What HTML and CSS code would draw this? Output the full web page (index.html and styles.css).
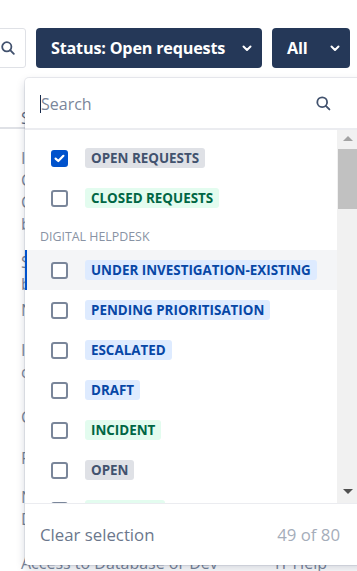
FILE: index.html
```html
<!DOCTYPE html>
<html lang="en">
<head>
<meta charset="utf-8">
<title>Requests filter</title>
<link rel="stylesheet" href="styles.css">
</head>
<body>
<div class="page">
  <div class="toolbar">
    <button class="icon-btn" aria-label="Search">
      <svg width="14" height="14" viewBox="0 0 14 14"><circle cx="5.8" cy="5.8" r="4.6" fill="none" stroke="#42526e" stroke-width="1.8"/><path d="M9.2 9.2 L12.8 12.8" stroke="#42526e" stroke-width="1.9" stroke-linecap="round"/></svg>
    </button>
    <button class="dark-btn status-btn">Status: Open requests
      <svg class="chev" width="10" height="7" viewBox="0 0 10 7"><path d="M1.5 1.5 L5 5 L8.5 1.5" fill="none" stroke="#fff" stroke-width="2" stroke-linecap="round" stroke-linejoin="round"/></svg>
    </button>
    <button class="dark-btn all-btn">All
      <svg class="chev" width="10" height="7" viewBox="0 0 10 7"><path d="M1.5 1.5 L5 5 L8.5 1.5" fill="none" stroke="#fff" stroke-width="2" stroke-linecap="round" stroke-linejoin="round"/></svg>
    </button>
  </div>

  <div class="table">
    <div class="thead">Summary</div>
    <div class="trow r1"><div>Issue with</div><div>Cannot access</div><div>Contact form</div><div>broken</div></div>
    <div class="trow r2"><div>Setup new</div><div>build server</div></div>
    <div class="trow r3"><div>New laptop</div></div>
    <div class="trow r4"><div>Install</div><div>certificate</div></div>
    <div class="trow r5"><div>Change</div></div>
    <div class="trow r6"><div>Fix login</div></div>
    <div class="trow r7"><div>Network</div><div>Down</div></div>
    <div class="trow r8"><div class="last">Access to Database or Dev</div><div class="cell2">IT Help</div></div>
  </div>

  <div class="dropdown">
    <div class="search">
      <span class="caret"></span><span class="placeholder">Search</span>
      <svg class="search-ico" width="15" height="15" viewBox="0 0 15 15"><circle cx="6.2" cy="6.2" r="4.9" fill="none" stroke="#42526e" stroke-width="1.8"/><path d="M9.8 9.8 L13.4 13.4" stroke="#42526e" stroke-width="1.9" stroke-linecap="round"/></svg>
    </div>
    <div class="list-wrap">
      <div class="list">
        <div class="opt">
          <span class="cb checked"><svg width="11" height="9" viewBox="0 0 11 9"><path d="M1.6 4.6 L4.3 7 L9.4 1.8" fill="none" stroke="#fff" stroke-width="2.2" stroke-linecap="round" stroke-linejoin="round"/></svg></span>
          <span class="loz grey">OPEN REQUESTS</span>
        </div>
        <div class="opt"><span class="cb"></span><span class="loz green">CLOSED REQUESTS</span></div>
        <div class="group">DIGITAL HELPDESK</div>
        <div class="opt active"><span class="cb"></span><span class="loz blue">UNDER INVESTIGATION-EXISTING</span></div>
        <div class="opt"><span class="cb"></span><span class="loz blue">PENDING PRIORITISATION</span></div>
        <div class="opt"><span class="cb"></span><span class="loz blue">ESCALATED</span></div>
        <div class="opt"><span class="cb"></span><span class="loz blue">DRAFT</span></div>
        <div class="opt"><span class="cb"></span><span class="loz green">INCIDENT</span></div>
        <div class="opt"><span class="cb"></span><span class="loz grey">OPEN</span></div>
        <div class="opt"><span class="cb"></span><span class="loz green">RESOLVED</span></div>
      </div>
      <div class="scrollbar">
        <span class="arrow up"></span>
        <span class="thumb"></span>
        <span class="track"></span>
        <span class="arrow down"></span>
      </div>
    </div>
    <div class="footer">
      <span class="clear">Clear selection</span>
      <span class="count">49 of 80</span>
    </div>
  </div>
</div>
</body>
</html>
```

FILE: styles.css
```css
* { box-sizing: border-box; }
html, body { margin: 0; padding: 0; }
body {
  width: 357px;
  height: 571px;
  overflow: hidden;
  background: #fff;
  font-family: "Open Sans", "Noto Sans", sans-serif;
  color: #172b4d;
}
.page { position: relative; width: 357px; height: 571px; overflow: hidden; }

.toolbar {
  display: flex;
  align-items: center;
  gap: 10px;
  padding-top: 28px;
  margin-left: -14px;
  height: 68px;
}
button { font-family: inherit; border: 0; padding: 0; margin: 0; cursor: pointer; }
.icon-btn {
  width: 40px; height: 40px;
  background: #fff;
  border: 1px solid #dfe1e6;
  border-radius: 3px;
  display: flex; align-items: center; justify-content: flex-end;
  padding-right: 10px;
}
.dark-btn {
  height: 40px;
  background: #253858;
  color: #fff;
  border-radius: 4px;
  font-weight: 700;
  font-size: 16.2px;
  display: flex; align-items: center;
  letter-spacing: -0.2px;
}
.status-btn { width: 226px; padding: 0 10px 0 15px; justify-content: space-between; }
.all-btn { width: 78px; padding: 0 10px 0 15px; justify-content: space-between; }
.chev { display: block; }

.table { color: #7a869a; font-size: 16px; line-height: 22px; }
.thead { height: 61px; padding: 39px 0 0 21px; border-bottom: 2px solid #dfe1e6; color: #5e6c84; }
.trow { padding-left: 21px; }
.trow.r1 { padding-top: 18px; }
.trow.r2 { padding-top: 16px; }
.trow.r3 { padding-top: 4px; }
.trow.r4 { padding-top: 18px; }
.trow.r5 { padding-top: 23px; }
.trow.r6 { padding-top: 19px; }
.trow.r7 { padding-top: 17px; }
.trow.r8 { padding-top: 22px; display: flex; }
.trow.r8 .cell2 { margin-left: auto; margin-right: 30px; }

.dropdown {
  position: absolute;
  left: 25px; top: 78px;
  width: 340px; height: 487px;
  background: #fff;
  border-radius: 4px;
  box-shadow: 0 0 0 1px rgba(9,30,66,0.08), 0 4px 10px rgba(9,30,66,0.18);
  display: flex; flex-direction: column;
  overflow: hidden;
}
.search {
  height: 52px;
  display: flex; align-items: center;
  padding-left: 15px;
  padding-top: 2px;
  border-bottom: 2px solid #ebecf0;
  position: relative;
  flex-shrink: 0;
}
.caret { width: 1px; height: 18px; background: #172b4d; }
.placeholder { font-size: 16px; color: #7a869a; }
.search-ico { position: absolute; left: 291px; top: 18px; }

.list-wrap { flex: 1; display: flex; overflow: hidden; min-height: 0; }
.list { width: 312px; padding-top: 8px; overflow: hidden; }
.opt {
  height: 40px;
  display: flex; align-items: center;
  padding-left: 26px;
  gap: 17px;
}
.opt.active { background: #f4f5f7; box-shadow: inset 2px 0 0 #0052cc; }
.cb {
  width: 17px; height: 17px;
  border: 2px solid #7a869a;
  border-radius: 3px;
  background: #fff;
  flex-shrink: 0;
  display: flex; align-items: center; justify-content: center;
}
.cb.checked { background: #0052cc; border-color: #0052cc; }
.cb svg { display: block; }
.loz {
  height: 20px;
  line-height: 20px;
  padding: 0 6px;
  border-radius: 3px;
  font-size: 13.4px;
  font-weight: 700;
  white-space: nowrap;
}
.loz.grey { background: #dfe1e6; color: #42526e; }
.loz.green { background: #e3fcef; color: #006644; }
.loz.blue { background: #deebff; color: #0747a6; }
.group {
  height: 32px;
  padding: 11px 0 0 15px;
  line-height: 16px;
  font-size: 12.4px;
  color: #8993a4;
}

.scrollbar {
  width: 21px;
  background: #f1f1f1;
  display: flex; flex-direction: column; align-items: stretch;
  padding-top: 6px;
}
.arrow { width: 0; height: 0; align-self: center; border-left: 5px solid transparent; border-right: 5px solid transparent; }
.arrow.up { border-bottom: 5px solid #a3a3a3; }
.arrow.down { border-top: 5px solid #505050; margin-bottom: 9px; }
.thumb { height: 60px; background: #c1c1c1; margin: 8px 1px 0 1px; }
.track { flex: 1; }

.footer {
  height: 62px;
  flex-shrink: 0;
  border-top: 1px solid #ebecf0;
  display: flex; align-items: center; justify-content: space-between;
  padding: 0 25px 0 15px;
  font-size: 16.8px;
}
.clear { color: #6b778c; }
.count { color: #a5adba; }
```
